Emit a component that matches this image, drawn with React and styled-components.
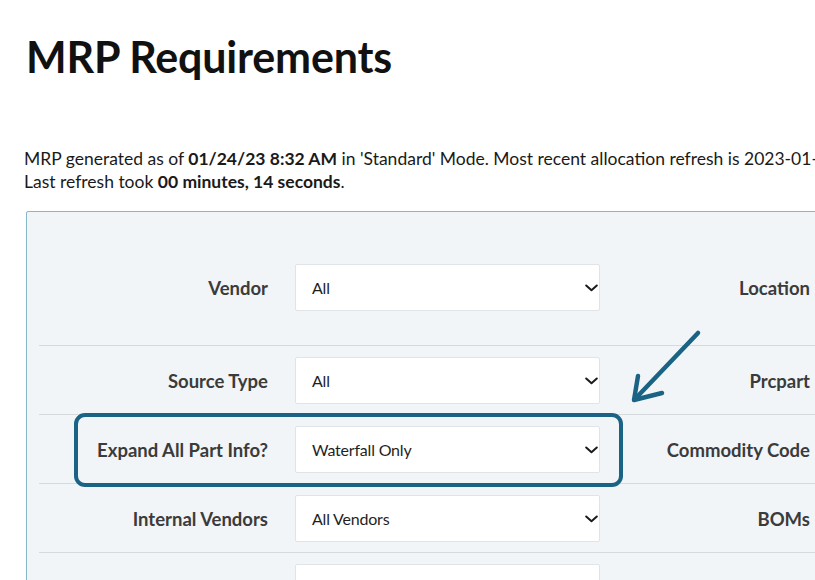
import React from "react";
import styled, { createGlobalStyle } from "styled-components";

const GlobalStyle = createGlobalStyle`
  html, body {
    margin: 0;
    padding: 0;
    overflow: hidden;
    background: #ffffff;
  }
  body {
    font-family: Lato, "Noto Sans", sans-serif;
    color: #1a1a1a;
  }
`;

const Page = styled.div`
  position: relative;
  width: 815px;
  height: 580px;
  padding: 0 0 0 26px;
  box-sizing: border-box;
  overflow: hidden;
`;

const Title = styled.h1`
  margin: 0;
  padding-top: 34px;
  font-size: 43px;
  line-height: 46px;
  font-weight: 700;
  color: #111;
  letter-spacing: -0.2px;
`;

const Info = styled.p`
  margin: 67px 0 0 -2px;
  font-size: 17.5px;
  line-height: 23px;
  color: #1a1a1a;
  white-space: nowrap;

  b {
    font-weight: 700;
  }
`;

const Panel = styled.div`
  margin-top: 18px;
  width: 1200px;
  border: 1px solid #86b9c5;
  border-radius: 2px;
  background: #f1f5f7;
  padding: 0 0 0 12px;
`;

const Row = styled.div`
  display: grid;
  grid-template-columns: 229px 305px 183px 305px;
  column-gap: 27px;
  align-items: center;
  padding: ${(p) => (p.$first ? "52px 0 34px" : "11px 0 10px")};
  border-bottom: 1px solid #d5dadd;
`;

const Label = styled.label`
  text-align: right;
  font-size: 18.5px;
  font-weight: 700;
  color: #3b3b3b;
  white-space: nowrap;
`;

const SelectBox = styled.div`
  display: flex;
  align-items: center;
  justify-content: space-between;
  height: 47px;
  box-sizing: border-box;
  padding: 0 1px 0 16px;
  background: #ffffff;
  border: 1px solid #e0e4e7;
  border-radius: 2px;
  font-size: 16px;
  color: #1f1f1f;
  letter-spacing: -0.2px;
`;

const Highlight = styled.div`
  position: absolute;
  left: 74px;
  top: 413px;
  width: 549px;
  height: 74px;
  box-sizing: border-box;
  border: 4px solid #1a6384;
  border-radius: 11px;
  pointer-events: none;
`;

const Arrow = styled.svg`
  position: absolute;
  left: 620px;
  top: 320px;
  overflow: visible;
  pointer-events: none;
`;

const Chevron = () => (
  <svg width="13" height="8" viewBox="0 0 13 8">
    <path d="M1.2 1.5 L6.5 6.3 L11.8 1.5" fill="none" stroke="#1b1b1b" strokeWidth="2" strokeLinecap="round" strokeLinejoin="round" />
  </svg>
);

const Select = ({ value }) => (
  <SelectBox>
    <span>{value}</span>
    <Chevron />
  </SelectBox>
);

const rows = [
  { label: "Vendor", value: "All", right: "Location" },
  { label: "Source Type", value: "All", right: "Prcpart" },
  { label: "Expand All Part Info?", value: "Waterfall Only", right: "Commodity Code" },
  { label: "Internal Vendors", value: "All Vendors", right: "BOMs" },
  { label: "", value: "", right: "" },
];

const App = () => {
  return (
    <>
      <GlobalStyle />
      <Page>
        <Title>MRP Requirements</Title>
        <Info>
          MRP generated as of <b>01/24/23 8:32 AM</b> in 'Standard' Mode. Most recent allocation refresh is 2023-01-24 08:30 AM.
          <br />
          Last refresh took <b>00 minutes, 14 seconds</b>.
        </Info>
        <Panel>
          {rows.map((r, i) => (
            <Row key={i} $first={i === 0}>
              <Label>{r.label}</Label>
              <Select value={r.value} />
              <Label>{r.right}</Label>
              <Select value="All" />
            </Row>
          ))}
        </Panel>
        <Highlight />
        <Arrow width="90" height="90" viewBox="0 0 90 90">
          <g fill="none" stroke="#1a6384" strokeWidth="4.5" strokeLinecap="round" strokeLinejoin="round">
            <path d="M78 13 L15 79" />
            <path d="M18 56 L14 80 L42 73" />
          </g>
        </Arrow>
      </Page>
    </>
  );
};

export default App;
